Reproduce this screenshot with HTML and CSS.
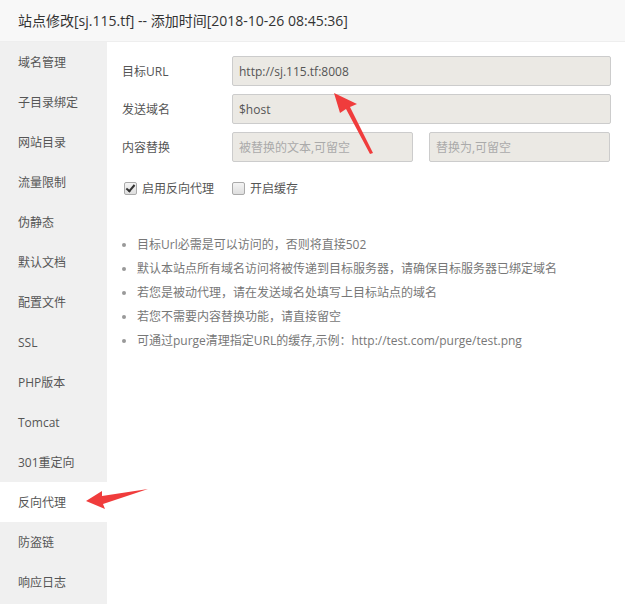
FILE: index.html
```html
<!DOCTYPE html>
<html lang="zh-CN">
<head>
    <meta charset="UTF-8">
    <title>站点修改</title>
    <link rel="stylesheet" href="styles.css">
</head>
<body>
    <div class="layer">
        <div class="layer-title">站点修改[sj.115.tf] -- 添加时间[2018-10-26 08:45:36]</div>
        <div class="layer-body">
            <!-- 左侧菜单 -->
            <ul class="menu">
                <li>域名管理</li>
                <li>子目录绑定</li>
                <li>网站目录</li>
                <li>流量限制</li>
                <li>伪静态</li>
                <li>默认文档</li>
                <li>配置文件</li>
                <li>SSL</li>
                <li>PHP版本</li>
                <li>Tomcat</li>
                <li>301重定向</li>
                <li class="active">反向代理</li>
                <li>防盗链</li>
                <li>响应日志</li>
            </ul>

            <!-- 反向代理设置 -->
            <div class="content">
                <div class="form-line">
                    <span class="label">目标URL</span>
                    <input class="field" type="text" value="http://sj.115.tf:8008">
                </div>
                <div class="form-line">
                    <span class="label">发送域名</span>
                    <input class="field" type="text" value="$host">
                </div>
                <div class="form-line">
                    <span class="label">内容替换</span>
                    <input class="field half" type="text" placeholder="被替换的文本,可留空">
                    <input class="field half" type="text" placeholder="替换为,可留空">
                </div>
                <div class="checks">
                    <label class="check"><span class="box checked"></span>启用反向代理</label>
                    <label class="check"><span class="box"></span>开启缓存</label>
                </div>
                <ul class="help">
                    <li>目标Url必需是可以访问的，否则将直接502</li>
                    <li>默认本站点所有域名访问将被传递到目标服务器，请确保目标服务器已绑定域名</li>
                    <li>若您是被动代理，请在发送域名处填写上目标站点的域名</li>
                    <li>若您不需要内容替换功能，请直接留空</li>
                    <li>可通过purge清理指定URL的缓存,示例：http://test.com/purge/test.png</li>
                </ul>
            </div>
        </div>

        <!-- 标注箭头 -->
        <svg class="mark mark-url" width="60" height="70" viewBox="0 0 60 70">
            <path d="M3 2 L26 13 L19 16 L42 62 L39 63 L15 18 L9 22 Z" fill="#f03c3c"/>
        </svg>
        <svg class="mark mark-menu" width="70" height="24" viewBox="0 0 70 24">
            <path d="M2 14 L18 4 L18 9 L64 2 L19 17 L21 22 Z" fill="#f03c3c"/>
        </svg>
    </div>
</body>
</html>
```

FILE: styles.css
```css
body {
    margin: 0;
    font-family: "Open Sans", "Noto Sans CJK SC", sans-serif;
    font-size: 12px;
    color: #555;
    background: #fff;
}
.layer {
    position: relative;
    width: 625px;
    height: 604px;
    overflow: hidden;
}
.layer-title {
    height: 41px;
    line-height: 41px;
    padding-left: 18px;
    font-size: 14px;
    color: #333;
    background: #f8f8f8;
    border-bottom: 1px solid #eee;
}
.layer-body {
    display: flex;
    height: 562px;
}
.menu {
    flex: none;
    width: 107px;
    margin: 0;
    padding: 0;
    list-style: none;
    background: #f0f0f0;
}
.menu li {
    height: 39px;
    line-height: 39px;
    padding: 1px 0 0 18px;
    color: #555;
}
.menu li.active {
    background: #fff;
}
.content {
    flex: 1;
    min-width: 0;
    padding: 14px 14px 0 15px;
}
.form-line {
    display: flex;
    align-items: center;
    gap: 16px;
    margin-bottom: 8px;
}
.label {
    flex: none;
    width: 94px;
    color: #555;
}
.field {
    flex: none;
    width: 379px;
    height: 30px;
    box-sizing: border-box;
    padding: 0 6px;
    border: 1px solid #ccc;
    border-radius: 2px;
    background: #ebe9e4;
    font-family: "Open Sans", "Noto Sans CJK SC", sans-serif;
    font-size: 12px;
    color: #555;
    outline: none;
}
.field.half {
    width: 181px;
}
.field::placeholder {
    color: #aaa;
}
.checks {
    display: flex;
    align-items: center;
    height: 22px;
    margin-top: 15px;
    padding-left: 2px;
}
.check {
    display: flex;
    align-items: center;
    width: 108px;
    color: #555;
}
.box {
    width: 11px;
    height: 11px;
    margin-right: 5px;
    border: 1px solid #aaa;
    border-radius: 2px;
    background: linear-gradient(#f4f4f4, #dedede);
    position: relative;
}
.box.checked::after {
    content: "";
    position: absolute;
    left: 3px;
    top: 0;
    width: 3px;
    height: 7px;
    border: solid #333;
    border-width: 0 2px 2px 0;
    transform: rotate(40deg);
}
.help {
    margin: 34px 0 0;
    padding-left: 15px;
    color: #777;
    line-height: 24px;
}
.help li {
    list-style: none;
    position: relative;
}
.help li::before {
    content: "";
    position: absolute;
    left: -15px;
    top: 10px;
    width: 4px;
    height: 4px;
    border-radius: 50%;
    background: #999;
}
.mark {
    position: absolute;
}
.mark-url {
    left: 331px;
    top: 91px;
}
.mark-menu {
    left: 84px;
    top: 487px;
}
```
